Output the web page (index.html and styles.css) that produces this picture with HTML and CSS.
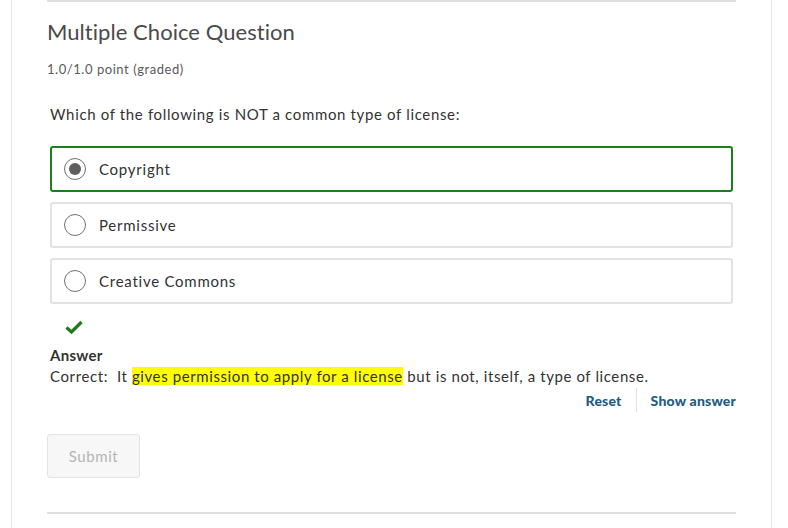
FILE: index.html
```html
<!DOCTYPE html>
<html>
<head>
<meta charset="utf-8">
<link rel="stylesheet" href="styles.css">
</head>
<body>
<div class="frame">
  <div class="problem">
    <h3 class="title">Multiple Choice Question</h3>
    <div class="points">1.0/1.0 point (graded)</div>
    <p class="prompt">Which of the following is NOT a common type of license:</p>
    <div class="choices">
      <label class="choice selected"><span class="radio checked"></span><span>Copyright</span></label>
      <label class="choice"><span class="radio"></span><span>Permissive</span></label>
      <label class="choice"><span class="radio"></span><span>Creative Commons</span></label>
    </div>
    <div class="status">
      <svg width="18" height="14" viewBox="0 0 18 14"><path d="M1.5 7.5 L6.5 12 L16.5 2" fill="none" stroke="#1f7a1f" stroke-width="3.2" stroke-linejoin="miter"/></svg>
    </div>
    <div class="answer">
      <div class="answer-label">Answer</div>
      <div class="answer-text">Correct:&nbsp; It <mark>gives permission to apply for a license</mark> but is not, itself, a type of license.</div>
    </div>
    <div class="actions">
      <a class="action">Reset</a>
      <span class="sep"></span>
      <a class="action">Show answer</a>
    </div>
    <button class="submit">Submit</button>
  </div>
</div>
</body>
</html>
```
FILE: styles.css
```css
html, body { margin: 0; padding: 0; background: #fff; }
body { font-family: "Lato", "Open Sans", sans-serif; color: #333; }
.frame {
  margin-left: 11px;
  width: 761px;
  height: 528px;
  border-left: 1px solid #e4e4e4;
  border-right: 1px solid #e4e4e4;
  padding-left: 35px;
  box-sizing: border-box;
  overflow: hidden;
}
.problem {
  width: 689px;
  border-top: 2px solid #dedede;
  border-bottom: 2px solid #dedede;
  margin-top: 0;
  padding-top: 15px;
  padding-bottom: 34px;
}
.title {
  margin: 0;
  font-weight: 400;
  font-size: 22px;
  line-height: 30px;
  color: #4a4a4a;
  letter-spacing: 0.05px;
}
.points {
  margin-top: 13px;
  font-size: 13px;
  line-height: 18px;
  color: #5a5a5a;
  letter-spacing: 0.55px;
}
.prompt {
  margin: 25px 0 0 3px;
  font-size: 15px;
  line-height: 22px;
  color: #333;
  letter-spacing: 0.65px;
}
.choices {
  margin: 21px 0 0 3px;
  width: 683px;
  display: flex;
  flex-direction: column;
  gap: 10px;
}
.choice {
  display: flex;
  align-items: center;
  height: 46px;
  box-sizing: border-box;
  border: 2px solid #e2e2e2;
  border-radius: 3px;
  padding-left: 12px;
  font-size: 15px;
  color: #333;
  letter-spacing: 0.75px;
}
.choice.selected { border-color: #1b7f1b; }
.radio {
  width: 22px;
  height: 22px;
  border-radius: 50%;
  border: 1px solid #707070;
  box-sizing: border-box;
  margin-right: 13px;
  position: relative;
  flex: none;
}
.radio.checked::after {
  content: "";
  position: absolute;
  left: 4px; top: 4px;
  width: 12px; height: 12px;
  border-radius: 50%;
  background: #5f5f5f;
}
.status {
  margin: 16px 0 0 18px;
  height: 14px;
  line-height: 0;
}
.answer { margin: 10px 0 0 3px; font-size: 15px; color: #333; letter-spacing: 0.6px; }
.answer-label { font-weight: 700; line-height: 22px; letter-spacing: 0.3px; }
.answer-text { line-height: 21px; }
mark { background: #ffff00; color: #333; padding: 0; }
.actions {
  display: flex;
  justify-content: flex-end;
  align-items: center;
  margin-top: 1px;
  height: 24px;
}
.action {
  font-size: 14px;
  font-weight: 900;
  color: #235b82;
  letter-spacing: 0.2px;
}
.sep {
  width: 1px;
  height: 24px;
  background: #e2e2e2;
  margin: 0 14px;
}
.submit {
  margin-top: 22px;
  width: 93px;
  height: 44px;
  background: #f7f7f7;
  border: 1px solid #e4e4e4;
  border-radius: 3px;
  font-family: inherit;
  font-size: 15px;
  color: #b5b5b5;
  letter-spacing: 0.6px;
  display: block;
}
```
